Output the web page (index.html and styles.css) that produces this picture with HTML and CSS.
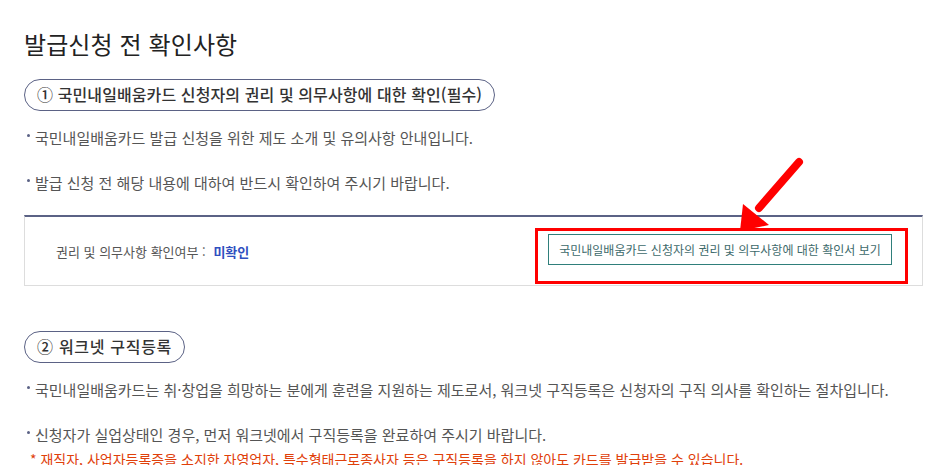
FILE: index.html
```html
<!DOCTYPE html>
<html lang="ko">
<head>
  <meta charset="UTF-8" />
  <meta name="viewport" content="width=device-width, initial-scale=1.0"/>
  <title>발급신청 전 확인사항</title>
  <link rel="stylesheet" href="styles.css">
</head>
<body>

  <div class="page">
    <h2 class="page-title">발급신청 전 확인사항</h2>

    <!-- ① 권리 및 의무사항 -->
    <section class="step">
      <h3 class="step-title">① 국민내일배움카드 신청자의 권리 및 의무사항에 대한 확인(필수)</h3>
      <ul class="dot-list">
        <li>국민내일배움카드 발급 신청을 위한 제도 소개 및 유의사항 안내입니다.</li>
        <li>발급 신청 전 해당 내용에 대하여 반드시 확인하여 주시기 바랍니다.</li>
      </ul>

      <div class="check-box">
        <p class="check-state">권리 및 의무사항 확인여부 : <strong>미확인</strong></p>
        <button class="btn-line" type="button">국민내일배움카드 신청자의 권리 및 의무사항에 대한 확인서 보기</button>

        <!-- 안내용 강조 표시 -->
        <span class="mark-box"></span>
        <svg class="mark-arrow" width="80" height="80" viewBox="0 0 80 80">
          <line x1="68" y1="10" x2="28" y2="56" stroke="#f00" stroke-width="8" stroke-linecap="round"/>
          <polygon points="12,52 38,73 9,79" fill="#f00"/>
        </svg>
      </div>
    </section>

    <!-- ② 워크넷 구직등록 -->
    <section class="step step-2">
      <h3 class="step-title wide">② 워크넷 구직등록</h3>
      <ul class="dot-list">
        <li>국민내일배움카드는 취·창업을 희망하는 분에게 훈련을 지원하는 제도로서, 워크넷 구직등록은 신청자의 구직 의사를 확인하는 절차입니다.</li>
        <li>신청자가 실업상태인 경우, 먼저 워크넷에서 구직등록을 완료하여 주시기 바랍니다.</li>
      </ul>
      <p class="note">* 재직자, 사업자등록증을 소지한 자영업자, 특수형태근로종사자 등은 구직등록을 하지 않아도 카드를 발급받을 수 있습니다.</p>
    </section>
  </div>

</body>
</html>
```

FILE: styles.css
```css
* { margin: 0; padding: 0; box-sizing: border-box; }
html, body {
  font-family: "Noto Sans CJK KR", "Noto Sans", sans-serif;
  color: #555;
  background: #fff;
  overflow: hidden;
}

.page {
  width: 899px;
  margin-left: 24px;
  padding-top: 26px;
}

.page-title {
  font-size: 24px;
  font-weight: 400;
  line-height: 36px;
  color: #222;
  letter-spacing: 0.1px;
}

/* 단계 제목 (pill) */
.step {
  margin-top: 17px;
}
.step-2 {
  margin-top: 45px;
}
.step-title {
  display: inline-block;
  height: 32px;
  line-height: 29px;
  padding: 0 12px 0 12px;
  border: 1.5px solid #5b6285;
  border-radius: 16px;
  font-size: 16px;
  font-weight: 500;
  color: #333;
  letter-spacing: 0.1px;
}
.step-title.wide {
  letter-spacing: 0.7px;
}

/* 목록 */
.dot-list {
  list-style: none;
  margin-top: 15px;
}
.dot-list li {
  position: relative;
  padding-left: 11px;
  font-size: 15px;
  line-height: 24px;
  color: #555;
}
.dot-list li + li {
  margin-top: 21px;
}
.dot-list li::before {
  content: "";
  position: absolute;
  left: 3px;
  top: 8px;
  width: 3px;
  height: 3px;
  border-radius: 50%;
  background: #5b6285;
}

.note {
  margin-top: 2px;
  padding-left: 6px;
  font-size: 14px;
  line-height: 20px;
  color: #e0400a;
}

/* 확인 박스 */
.check-box {
  position: relative;
  display: flex;
  justify-content: space-between;
  align-items: center;
  height: 71px;
  margin-top: 20px;
  padding: 0 30px 0 31px;
  border: 1px solid #ddd;
  border-top: 2px solid #5b6285;
}
.check-state {
  font-size: 13px;
  color: #555;
}
.check-state strong {
  margin-left: 4px;
  color: #2f4fc0;
  font-weight: 700;
}
.btn-line {
  width: 344px;
  height: 31px;
  padding: 0;
  border: 1px solid #2f7f7b;
  background: #fff;
  font-family: inherit;
  font-size: 12px;
  color: #3d6a6b;
  margin-top: -3px;
}

.mark-box {
  position: absolute;
  left: 510px;
  top: 11px;
  width: 373px;
  height: 56px;
  border: 3px solid #f00;
}
.mark-arrow {
  position: absolute;
  left: 706px;
  top: -65px;
}
```
